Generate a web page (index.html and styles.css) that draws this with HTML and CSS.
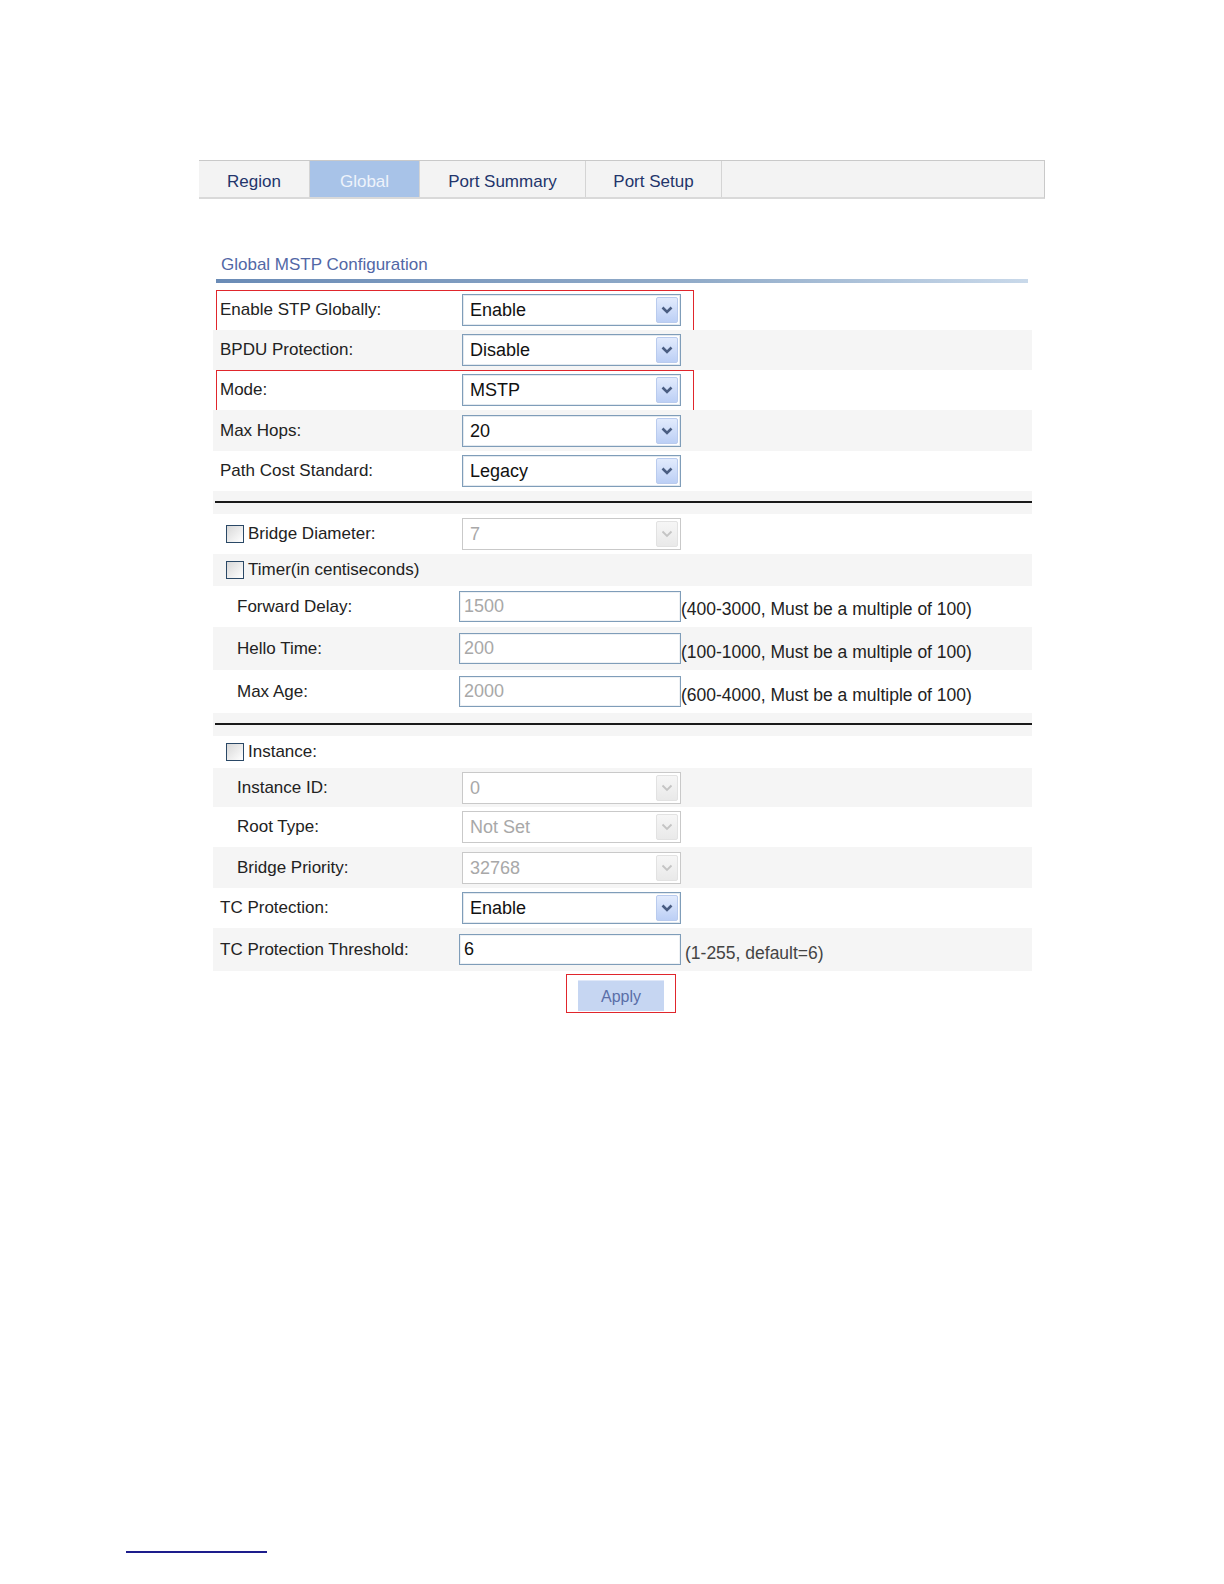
FILE: index.html
```html
<!DOCTYPE html>
<html lang="en">
<head>
    <meta charset="UTF-8">
    <title>Global MSTP Configuration</title>
    <link rel="stylesheet" href="styles.css">
</head>
<body>
    <div class="page">
        <div class="tabs">
            <div class="tab tab-region">Region</div>
            <div class="tab tab-global active">Global</div>
            <div class="tab tab-summary">Port Summary</div>
            <div class="tab tab-setup">Port Setup</div>
            <div class="tab-rest"></div>
        </div>

        <div class="panel">
            <div class="title">Global MSTP Configuration</div>
            <div class="title-bar"></div>

            <div class="rows">
                <div class="row hl">
                    <div class="label">Enable STP Globally:</div>
                    <div class="select"><span class="val">Enable</span><span class="arrow"><svg width="12" height="8" viewBox="0 0 12 8"><path d="M1.5 1.5 L6 6 L10.5 1.5" fill="none" stroke="#4a5d82" stroke-width="2.6"/></svg></span></div>
                </div>
                <div class="row">
                    <div class="label">BPDU Protection:</div>
                    <div class="select"><span class="val">Disable</span><span class="arrow"><svg width="12" height="8" viewBox="0 0 12 8"><path d="M1.5 1.5 L6 6 L10.5 1.5" fill="none" stroke="#4a5d82" stroke-width="2.6"/></svg></span></div>
                </div>
                <div class="row hl">
                    <div class="label">Mode:</div>
                    <div class="select"><span class="val">MSTP</span><span class="arrow"><svg width="12" height="8" viewBox="0 0 12 8"><path d="M1.5 1.5 L6 6 L10.5 1.5" fill="none" stroke="#4a5d82" stroke-width="2.6"/></svg></span></div>
                </div>
                <div class="row row-tall">
                    <div class="label">Max Hops:</div>
                    <div class="select"><span class="val">20</span><span class="arrow"><svg width="12" height="8" viewBox="0 0 12 8"><path d="M1.5 1.5 L6 6 L10.5 1.5" fill="none" stroke="#4a5d82" stroke-width="2.6"/></svg></span></div>
                </div>
                <div class="row">
                    <div class="label">Path Cost Standard:</div>
                    <div class="select"><span class="val">Legacy</span><span class="arrow"><svg width="12" height="8" viewBox="0 0 12 8"><path d="M1.5 1.5 L6 6 L10.5 1.5" fill="none" stroke="#4a5d82" stroke-width="2.6"/></svg></span></div>
                </div>
                <div class="row sep"><div class="sep-line"></div></div>

                <div class="row">
                    <div class="label check-label"><span class="checkbox"></span>Bridge Diameter:</div>
                    <div class="select disabled"><span class="val">7</span><span class="arrow"><svg width="12" height="8" viewBox="0 0 12 8"><path d="M1.5 1.5 L6 6 L10.5 1.5" fill="none" stroke="#c4c4c4" stroke-width="1.8"/></svg></span></div>
                </div>
                <div class="row row-short">
                    <div class="label check-label wide"><span class="checkbox"></span>Timer(in centiseconds)</div>
                </div>
                <div class="row row-tall">
                    <div class="label sub">Forward Delay:</div>
                    <div class="input disabled">1500</div>
                    <div class="hint">(400-3000, Must be a multiple of 100)</div>
                </div>
                <div class="row row-taller">
                    <div class="label sub">Hello Time:</div>
                    <div class="input disabled">200</div>
                    <div class="hint">(100-1000, Must be a multiple of 100)</div>
                </div>
                <div class="row row-taller">
                    <div class="label sub">Max Age:</div>
                    <div class="input disabled">2000</div>
                    <div class="hint">(600-4000, Must be a multiple of 100)</div>
                </div>
                <div class="row sep"><div class="sep-line"></div></div>

                <div class="row row-short">
                    <div class="label check-label"><span class="checkbox"></span>Instance:</div>
                </div>
                <div class="row row-mid">
                    <div class="label sub">Instance ID:</div>
                    <div class="select disabled"><span class="val">0</span><span class="arrow"><svg width="12" height="8" viewBox="0 0 12 8"><path d="M1.5 1.5 L6 6 L10.5 1.5" fill="none" stroke="#c4c4c4" stroke-width="1.8"/></svg></span></div>
                </div>
                <div class="row">
                    <div class="label sub">Root Type:</div>
                    <div class="select disabled"><span class="val">Not Set</span><span class="arrow"><svg width="12" height="8" viewBox="0 0 12 8"><path d="M1.5 1.5 L6 6 L10.5 1.5" fill="none" stroke="#c4c4c4" stroke-width="1.8"/></svg></span></div>
                </div>
                <div class="row row-tall">
                    <div class="label sub">Bridge Priority:</div>
                    <div class="select disabled"><span class="val">32768</span><span class="arrow"><svg width="12" height="8" viewBox="0 0 12 8"><path d="M1.5 1.5 L6 6 L10.5 1.5" fill="none" stroke="#c4c4c4" stroke-width="1.8"/></svg></span></div>
                </div>
                <div class="row">
                    <div class="label">TC Protection:</div>
                    <div class="select"><span class="val">Enable</span><span class="arrow"><svg width="12" height="8" viewBox="0 0 12 8"><path d="M1.5 1.5 L6 6 L10.5 1.5" fill="none" stroke="#4a5d82" stroke-width="2.6"/></svg></span></div>
                </div>
                <div class="row row-taller">
                    <div class="label">TC Protection Threshold:</div>
                    <div class="input">6</div>
                    <div class="hint hint-small">(1-255, default=6)</div>
                </div>
            </div>

            <div class="actions">
                <div class="apply-box">
                    <div class="apply">Apply</div>
                </div>
            </div>
        </div>
    </div>

    <div class="footnote-rule"></div>
</body>
</html>
```

FILE: styles.css
```css
body {
    margin: 0;
    padding: 0;
    background-color: #ffffff;
    font-family: 'Liberation Sans', Arial, sans-serif;
    color: #222222;
}

.page {
    padding-top: 160px;
    padding-left: 199px;
    width: 846px;
}

/* abas */
.tabs {
    display: flex;
    height: 36px;
    border-top: 1px solid #c9c9c9;
    border-bottom: 2px solid #d9d9d9;
    background-color: #f3f3f3;
    border-right: 1px solid #c9c9c9;
}

.tab {
    display: flex;
    align-items: center;
    justify-content: center;
    font-size: 17px;
    color: #23356b;
    border-right: 1px solid #d4d4d4;
    padding-top: 5px;
    box-sizing: border-box;
}

.tab-region { width: 111px; }
.tab-global { width: 110px; }
.tab-summary { width: 166px; }
.tab-setup { width: 136px; }

.tab.active {
    background-color: #a8c3e8;
    color: #eef3fb;
}

.tab-rest {
    flex: 1;
}

/* painel */
.panel {
    margin-left: 14px;
    width: 819px;
}

.title {
    margin-top: 56px;
    padding-left: 8px;
    font-size: 17px;
    color: #5267a6;
    height: 24px;
}

.title-bar {
    margin-left: 3px;
    width: 812px;
    height: 4px;
    background: linear-gradient(to right, #6a8bb6, #92acc9 60%, #c9d9ea);
    margin-bottom: 7px;
}

.row {
    position: relative;
    display: flex;
    align-items: center;
    height: 40px;
    font-size: 17px;
}

.rows .row:nth-child(even) {
    background-color: #f5f5f5;
}

.row-tall { height: 41px; }
.row-taller { height: 43px; }
.row-short { height: 32px; }
.row-mid { height: 39px; }

.row.hl::after {
    content: "";
    position: absolute;
    left: 3px;
    top: 0;
    width: 476px;
    height: 39px;
    border: 1px solid #e0262c;
}

.label {
    width: 246px;
    padding-left: 7px;
    box-sizing: border-box;
    white-space: nowrap;
}

.label.sub {
    padding-left: 24px;
}

.check-label {
    display: flex;
    align-items: center;
    padding-left: 13px;
}

.check-label.wide {
    width: auto;
}

.checkbox {
    display: inline-block;
    width: 16px;
    height: 16px;
    border: 1px solid #2a4866;
    background: linear-gradient(135deg, #d8d8d8, #ffffff);
    margin-right: 4px;
}

/* selects */
.select {
    display: flex;
    align-items: center;
    justify-content: space-between;
    width: 219px;
    height: 32px;
    margin-left: 3px;
    box-sizing: border-box;
    border: 1px solid #7f9db9;
    box-shadow: inset 0 0 0 1px #e3e9ef;
    background-color: #ffffff;
    font-size: 18px;
    color: #111111;
}

.select .val {
    padding-left: 7px;
    padding-top: 1px;
}

.select .arrow {
    display: flex;
    align-items: center;
    justify-content: center;
    width: 22px;
    height: 26px;
    margin-right: 2px;
    border: 1px solid #b9cbee;
    border-radius: 2px;
    background: linear-gradient(#e2ebfd, #bccff5);
    box-sizing: border-box;
}

.select.disabled {
    border-color: #c9c9c9;
    box-shadow: none;
    color: #a8a8a8;
}

.select.disabled .arrow {
    border-color: #e2e2e2;
    background: linear-gradient(#f6f6f6, #e9e9e9);
}

/* inputs */
.input {
    display: flex;
    align-items: center;
    width: 222px;
    height: 31px;
    box-sizing: border-box;
    border: 1px solid #7f9db9;
    box-shadow: inset 0 0 0 1px #eef1f4;
    background-color: #ffffff;
    padding-left: 4px;
    font-size: 18px;
    color: #111111;
}

.input.disabled {
    color: #a8a8a8;
}

.hint {
    align-self: flex-end;
    padding-bottom: 7px;
    font-size: 17.5px;
    white-space: nowrap;
}

.hint-small {
    padding-left: 4px;
    color: #444444;
}

.row.sep {
    height: 23px;
    align-items: flex-start;
}

.sep-line {
    margin-top: 10px;
    margin-left: 2px;
    width: 817px;
    height: 2px;
    background-color: #1a1a1a;
}

/* botao */
.actions {
    display: flex;
    padding-left: 353px;
    padding-top: 3px;
}

.apply-box {
    border: 1px solid #e0262c;
    padding: 5px 11px 1px 11px;
}

.apply {
    display: flex;
    align-items: center;
    justify-content: center;
    width: 86px;
    height: 31px;
    background-color: #c6d6f2;
    border-top: 1px solid #e0e8f8;
    box-sizing: border-box;
    color: #5a6ea8;
    font-size: 16px;
    padding-top: 2px;
}

.footnote-rule {
    margin-top: 538px;
    margin-left: 126px;
    width: 141px;
    height: 2px;
    background-color: #1d1d8c;
}
```
